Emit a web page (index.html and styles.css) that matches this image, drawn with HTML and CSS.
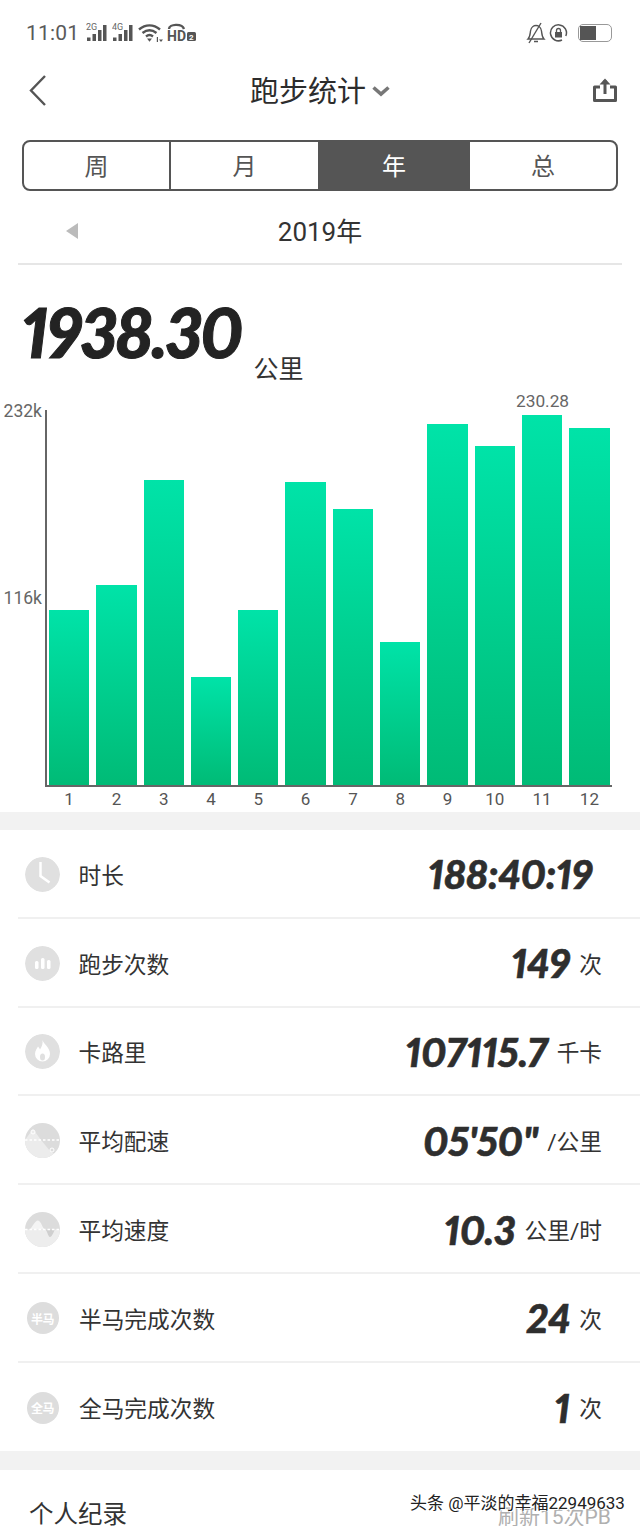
FILE: index.html
```html
<!DOCTYPE html>
<html lang="zh">
<head>
<meta charset="utf-8">
<title>跑步统计</title>
<link rel="stylesheet" href="styles.css">
</head>
<body>
<div class="page">
  <div class="status">
    <span class="time">11:01</span>
    <svg class="si" width="23" height="20" viewBox="0 0 23 20"><text x="0" y="7" class="sig">2G</text><rect x="1" y="14.500" width="3.500" height="3.500"/><rect x="6.500" y="11" width="3.500" height="7"/><rect x="12" y="7" width="3.500" height="11"/><rect x="17" y="2" width="3.500" height="16"/></svg>
    <svg class="si" width="23" height="20" viewBox="0 0 23 20"><text x="0" y="7" class="sig">4G</text><rect x="1" y="14.500" width="3.500" height="3.500"/><rect x="6.500" y="11" width="3.500" height="7"/><rect x="12" y="7" width="3.500" height="11"/><rect x="17" y="2" width="3.500" height="16"/></svg>
    <svg class="si" width="26" height="20" viewBox="0 0 26 20"><path d="M1 6.500C7.500 1 15.500 1 22 6.500M4.500 10C9 6.500 14 6.500 18.500 10M8 13.500C10.500 11.500 12.500 11.500 15 13.500" fill="none" stroke="#555" stroke-width="2.400"/><path d="M9 15.500h5l-2.500 3.200zM20 14v5h-1.200v-5zM23 19l2-2.500h-4z"/></svg>
    <svg class="si" width="30" height="20" viewBox="0 0 30 20"><path d="M2 6C2 1 15 0 17 6" fill="none" stroke="#555" stroke-width="2.400"/><text x="0" y="18" class="hd">HD</text><rect x="20" y="9" width="9" height="9" rx="1.500"/><text x="22" y="16.500" class="hd2">2</text></svg>
    <span class="status-gap"></span>
    <svg class="si" width="20" height="22" viewBox="0 0 20 22"><path d="M2 17c2-2 2-4 2.500-8C5 5 8 3.500 10 3.500S15 5 15.500 9c.5 4 .5 6 2.500 8zM8 19.500h4" fill="none" stroke="#555" stroke-width="1.400"/><path d="M3 21L15 1" stroke="#555" stroke-width="1.400"/></svg>
    <svg class="si" width="19" height="20" viewBox="0 0 19 20"><path d="M16.800 13A8 8 0 1 0 13 17" fill="none" stroke="#555" stroke-width="1.500"/><rect x="6" y="9" width="7" height="5.500"/><path d="M7.500 9V7.500a2 2 0 0 1 4 0V9" fill="none" stroke="#555" stroke-width="1.300"/></svg>
    <div class="battery"><div class="battery-fill"></div></div>
  </div>

  <header class="nav">
    <svg class="back" width="20" height="32" viewBox="0 0 20 32"><path d="M17 2L3 16.500L17 31" fill="none" stroke="#555" stroke-width="2.400"/></svg>
    <div class="nav-title">跑步统计<svg class="caret" width="20" height="12" viewBox="0 0 20 12"><path d="M2.500 2.500L10 9L17.500 2.500" fill="none" stroke="#777" stroke-width="3.600"/></svg></div>
    <svg class="share" width="26" height="26" viewBox="0 0 26 26"><path d="M8 10H2.500v13.500h21V10H18" fill="none" stroke="#555" stroke-width="3" stroke-linejoin="round"/><path d="M13 17V3" stroke="#555" stroke-width="3"/><path d="M7.500 7.500L13 1.500l5.500 6z" fill="#555"/></svg>
  </header>

  <div class="tabs">
    <div class="tab">周</div>
    <div class="tab">月</div>
    <div class="tab active">年</div>
    <div class="tab">总</div>
  </div>

  <div class="year-row">
    <span class="year-prev"></span>
    <span class="year">2019年</span>
  </div>

  <div class="total">
    <span class="total-num">1938.30</span>
    <span class="total-unit">公里</span>
  </div>

  <section class="chart">
    <div class="y-labels">
      <span>232k</span>
      <span>116k</span>
    </div>
    <div class="chart-main">
      <div class="plot">
        <div class="bar" style="height:175px"></div>
        <div class="bar" style="height:200px"></div>
        <div class="bar" style="height:305px"></div>
        <div class="bar" style="height:108px"></div>
        <div class="bar" style="height:175px"></div>
        <div class="bar" style="height:303px"></div>
        <div class="bar" style="height:276px"></div>
        <div class="bar" style="height:143px"></div>
        <div class="bar" style="height:361px"></div>
        <div class="bar" style="height:339px"></div>
        <div class="bar" style="height:370px"><span class="bar-value">230.28</span></div>
        <div class="bar" style="height:357px"></div>
      </div>
      <div class="x-labels">
        <span>1</span><span>2</span><span>3</span><span>4</span><span>5</span><span>6</span><span>7</span><span>8</span><span>9</span><span>10</span><span>11</span><span>12</span>
      </div>
    </div>
  </section>

  <section class="stats">
    <div class="row">
      <svg class="ic" viewBox="0 0 35 35"><circle cx="17.500" cy="17.500" r="17.500" fill="#e0e0e0"/><path d="M15.500 5v14l9 6.500" fill="none" stroke="#fff" stroke-width="2.500"/></svg>
      <span class="label">时长</span>
      <span class="val nounit">188:40:19</span>
    </div>
    <div class="row">
      <svg class="ic" viewBox="0 0 35 35"><circle cx="17.500" cy="17.500" r="17.500" fill="#e0e0e0"/><rect x="10" y="15" width="3.500" height="8" rx="1.500" fill="#fff"/><rect x="16" y="12" width="3.500" height="11" rx="1.500" fill="#fff"/><rect x="22" y="14" width="3.500" height="9" rx="1.500" fill="#fff"/></svg>
      <span class="label">跑步次数</span>
      <span class="val">149</span><span class="unit">次</span>
    </div>
    <div class="row">
      <svg class="ic" viewBox="0 0 35 35"><circle cx="17.500" cy="17.500" r="17.500" fill="#e0e0e0"/><path d="M17.500 6c1 4 7.500 7.500 7.500 14a7.500 7.500 0 0 1-15 0c0-3.500 2-5.500 3-7.500 1 1 1.500 2 2 3 2-3 3-6 2.500-9.500z" fill="#fff"/><ellipse cx="17.500" cy="23" rx="2.500" ry="3.500" fill="#e0e0e0"/></svg>
      <span class="label">卡路里</span>
      <span class="val">107115.7</span><span class="unit">千卡</span>
    </div>
    <div class="row">
      <svg class="ic" viewBox="0 0 35 35"><rect width="35" height="35" fill="#dcdcdc"/><path d="M0 17L8 6l8 11 9 11 10 7H0z" fill="#ececec"/><path d="M0 17h35" stroke="#fff" stroke-width="1.300" stroke-dasharray="2.500 2"/><circle cx="8" cy="9" r="2" fill="none" stroke="#fff"/><circle cx="27" cy="27" r="2" fill="none" stroke="#fff"/></svg>
      <span class="label">平均配速</span>
      <span class="val">05'50"</span><span class="unit">/公里</span>
    </div>
    <div class="row">
      <svg class="ic" viewBox="0 0 35 35"><rect width="35" height="35" fill="#dcdcdc"/><rect y="17.500" width="35" height="17.500" fill="#ededed"/><path d="M5 17.500C8 14 10 8.500 13 8.500s5 9 7 9z" fill="#f4f4f4"/><path d="M20 17.500c2 0 3 7.500 5 7.500s3-4 5-7.500z" fill="#cfcfcf"/><path d="M0 17.500h35" stroke="#fff" stroke-width="1.300" stroke-dasharray="2.500 2"/></svg>
      <span class="label">平均速度</span>
      <span class="val">10.3</span><span class="unit">公里/时</span>
    </div>
    <div class="row">
      <div class="ic-text">半马</div>
      <span class="label">半马完成次数</span>
      <span class="val">24</span><span class="unit">次</span>
    </div>
    <div class="row last">
      <div class="ic-text">全马</div>
      <span class="label">全马完成次数</span>
      <span class="val">1</span><span class="unit">次</span>
    </div>
  </section>

  <section class="records">
    <span class="records-title">个人纪录</span>
    <span class="records-pb">刷新15次PB</span>
    <span class="watermark">头条 @平淡的幸福22949633</span>
  </section>
</div>
</body>
</html>
```
FILE: styles.css
```css
* { box-sizing: border-box; }
html, body { margin: 0; padding: 0; background: #fff; }
body {
  font-family: Roboto, "Noto Sans CJK SC", sans-serif;
  color: #333;
}
.page { width: 640px; height: 1526px; overflow: hidden; position: relative; }

.status { height: 62px; display: flex; align-items: center; padding: 3px 28px 0 26px; gap: 3px; }
.time { font-size: 21px; color: #5a5a5a; margin-right: 4px; letter-spacing: .2px; }
.si { fill: #555; flex: none; }
.sig { font: 9px Roboto, sans-serif; fill: #666; }
.hd { font: 700 14px Roboto, sans-serif; fill: #555; }
.hd2 { font: 700 8px Roboto, sans-serif; fill: #fff; }
.status-gap { flex: 1; }
.battery { width: 34px; height: 18px; border: 1.500px solid #999; border-radius: 5px; margin-left: 7px; padding: 1px; }
.battery-fill { width: 16px; height: 100%; background: #555; }

.nav { height: 59px; display: flex; align-items: center; justify-content: space-between; padding: 0 22px 0 28px; position: relative; margin-top: -2px; }
.nav-title { position: absolute; left: 250px; top: 13px; font-size: 29px; line-height: 38px; color: #2c2c2c; display: flex; align-items: center; }
.caret { margin-left: 5px; margin-top: -3px; }

.tabs { margin: 21px 22px 0; height: 51px; border: 2px solid #555; border-radius: 8px; display: grid; grid-template-columns: 147px 149px 150px 1fr; overflow: hidden; }
.tab { display: flex; align-items: center; justify-content: center; font-size: 24px; color: #555; border-right: 2px solid #555; padding-bottom: 2px; }
.tab:last-child { border-right: 0; }
.tab.active { background: #555; color: #fff; }

.year-row { margin: 0 18px; height: 74px; border-bottom: 2px solid #e6e6e6; display: flex; align-items: center; justify-content: center; position: relative; padding-top: 4px; }
.year { font-size: 26px; color: #333; }
.year-prev { position: absolute; left: 48px; top: 32px; border-style: solid; border-width: 8.500px 12px 8.500px 0; border-color: transparent #bbb transparent transparent; }

.total { height: 145px; padding: 31px 0 0 22px; display: flex; align-items: flex-start; }
.total-num { font: italic 900 68px/72px Lato, sans-serif; font-variant-numeric: proportional-nums; color: #232323; letter-spacing: -1.800px; -webkit-text-stroke: 1px #232323; }
.total-unit { font-size: 25px; color: #333; margin: 56px 0 0 12px; line-height: 36px; }

.chart { display: flex; height: 402px; }
.y-labels { width: 46px; flex: none; }
.y-labels span { display: block; font-size: 17.500px; color: #666; line-height: 18px; text-align: right; padding-right: 4px; }
.y-labels span:first-child { margin-top: -8px; }
.y-labels span:last-child { margin-top: 169px; }
.chart-main { width: 566px; display: flex; flex-direction: column; }
.plot { flex: none; height: 377px; border-left: 2px solid #666; border-bottom: 2px solid #666; display: grid; grid-template-columns: repeat(12, 40.300px); column-gap: 7px; align-items: end; padding-left: 2px; margin-left: -1px; }
.bar { background: linear-gradient(#00e3a8, #00bb76); position: relative; }
.bar-value { position: absolute; top: -24px; left: -6px; font-size: 17.300px; line-height: 20px; color: #666; }
.x-labels { display: grid; grid-template-columns: repeat(12, 40.300px); column-gap: 7px; padding-left: 3px; }
.x-labels span { text-align: center; font-size: 17px; line-height: 25px; color: #555; }

.stats { background: #fff; border-top: 18px solid #f2f2f2; border-bottom: 19px solid #f2f2f2; }
.row { height: 88.800px; display: flex; align-items: center; margin-left: 18px; padding: 2px 38px 0 7px; border-bottom: 2px solid #f0f0f0; }
.row.last { border-bottom: 0; height: 88.400px; }
.ic { width: 35px; height: 35px; flex: none; border-radius: 50%; }
.ic-text { width: 32px; height: 32px; margin: 0 1.500px; border-radius: 50%; background: #ddd; color: #fff; font-size: 12px; font-weight: 700; display: flex; align-items: center; justify-content: center; flex: none; white-space: nowrap; letter-spacing: -.5px; }
.label { font-size: 22.700px; color: #333; margin-left: 19px; flex: 1; }
.ic + .label { margin-left: 18.500px; }
.val { font: italic 900 40px/48px Lato, sans-serif; font-variant-numeric: proportional-nums; color: #2e2e2e; letter-spacing: 0; -webkit-text-stroke: .6px #2e2e2e; }
.val.nounit { margin-right: 9px; }
.unit { font-size: 22.700px; color: #333; margin-left: 9px; }

.records { height: 70px; position: relative; padding: 28px 0 0 29px; }
.records-title { font-size: 24.500px; color: #333; line-height: 34px; }
.records-pb { position: absolute; left: 498px; top: 33px; font-size: 21px; line-height: 28px; color: #b0b0b0; }
.watermark { position: absolute; left: 410px; top: 21px; font-size: 17px; line-height: 24px; white-space: nowrap; color: #222; text-shadow: 1px 1px 0 #fff, -1px 0 0 #fff, 0 -1px 0 #fff; }
```
